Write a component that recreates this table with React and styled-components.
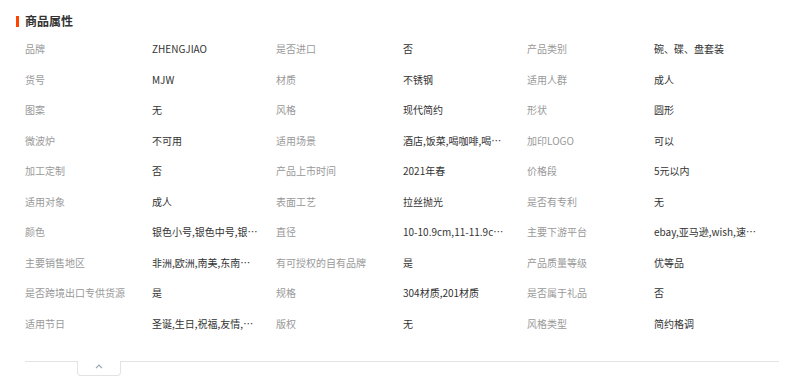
import styled, { createGlobalStyle } from 'styled-components';

const ATTRS = [
  ['品牌', 'ZHENGJIAO', '是否进口', '否', '产品类别', '碗、碟、盘套装'],
  ['货号', 'MJW', '材质', '不锈钢', '适用人群', '成人'],
  ['图案', '无', '风格', '现代简约', '形状', '圆形'],
  ['微波炉', '不可用', '适用场景', '酒店,饭菜,喝咖啡,喝茶,家用', '加印LOGO', '可以'],
  ['加工定制', '否', '产品上市时间', '2021年春', '价格段', '5元以内'],
  ['适用对象', '成人', '表面工艺', '拉丝抛光', '是否有专利', '无'],
  ['颜色', '银色小号,银色中号,银色大号', '直径', '10-10.9cm,11-11.9cm,12-12.9cm', '主要下游平台', 'ebay,亚马逊,wish,速卖通'],
  ['主要销售地区', '非洲,欧洲,南美,东南亚,北美', '有可授权的自有品牌', '是', '产品质量等级', '优等品'],
  ['是否跨境出口专供货源', '是', '规格', '304材质,201材质', '是否属于礼品', '否'],
  ['适用节日', '圣诞,生日,祝福,友情,新年', '版权', '无', '风格类型', '简约格调'],
];

export default function App() {
  return (
    <>
      <GlobalStyle />
      <Section>
        <Heading>
          <Bar />
          <h2>商品属性</h2>
        </Heading>

        <AttrTable>
          {ATTRS.map((row, i) =>
            row.map((text, j) =>
              j % 2 === 0
                ? <Label key={`${i}-${j}`}>{text}</Label>
                : <Value key={`${i}-${j}`}>{text}</Value>
            )
          )}
        </AttrTable>

        <Footer>
          <FoldTab type="button" aria-label="收起">
            <svg width="8" height="5" viewBox="0 0 8 5">
              <polyline points="1,4.2 4,1.2 7,4.2" fill="none" stroke="#9aa3b5" strokeWidth="1.2" />
            </svg>
          </FoldTab>
        </Footer>
      </Section>
    </>
  )
}

const GlobalStyle = createGlobalStyle`
  body {
    margin:0;
    background:#fff;
    font-family:"Noto Sans CJK SC", "Noto Sans", sans-serif;
  }
`

const Section = styled.section`
  width:800px;
  padding:12px 21px 0 16px;
  box-sizing:border-box;
`

const Heading = styled.div`
  display:flex;
  align-items:center;
  gap:0 6px;
  height:18px;

  h2 {
    margin:0;
    font-size:12px;
    line-height:18px;
    font-weight:700;
    color:#333;
  }
`

const Bar = styled.span`
  width:3px;
  height:11px;
  background:#ff4400;
`

const AttrTable = styled.div`
  margin:4px 0 0 9px;
  display:grid;
  grid-template-columns:127px 124px 127px 124px 127px 1fr;
  grid-auto-rows:30.5px;
  align-items:center;
  font-size:10px;
  line-height:14px;
`

const Label = styled.div`
  color:#999;
  white-space:nowrap;
`

const Value = styled.div`
  color:#333;
  max-width:108px;
  white-space:nowrap;
  overflow:hidden;
  text-overflow:ellipsis;
`

const Footer = styled.div`
  margin:22px 0 0 9px;
  border-top:1px solid #e3e3e3;
`

const FoldTab = styled.button`
  display:flex;
  justify-content:center;
  align-items:flex-start;
  margin:-1px 0 0 52px;
  padding:3px 0 0;
  width:44px;
  height:15px;
  box-sizing:border-box;
  background:#fff;
  border:1px solid #e3e3e3;
  border-top:none;
  border-radius:0 0 4px 4px;
  cursor:pointer;
`
